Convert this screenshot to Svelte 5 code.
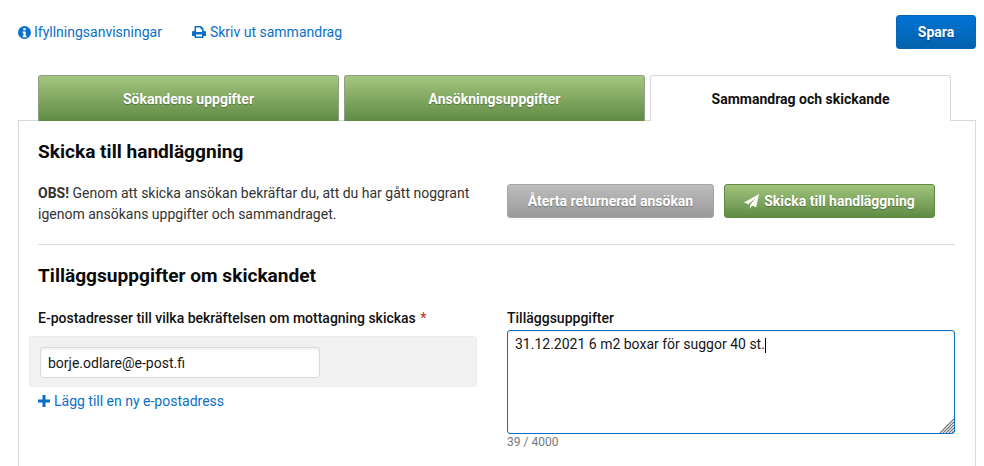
<script>
  let note = $state('31.12.2021 6 m2 boxar för suggor 40 st.');
  let email = $state('borje.odlare@e-post.fi');
</script>

<div class="page">
  <header class="top">
    <nav class="links">
      <a class="link" href="#info">
        <svg class="ico" viewBox="0 0 24 24" width="13" height="13"><path fill="currentColor" fill-rule="evenodd" d="M12 0a12 12 0 1 0 0 24 12 12 0 0 0 0-24zm-2.200 4h4.400v3.800H9.800zM8.400 10h5.800v8h1.600v2.600H8.400V18H10v-5.400H8.400z"/></svg>
        Ifyllningsanvisningar
      </a>
      <a class="link print" href="#print">
        <svg class="ico" viewBox="0 0 28 24" width="14" height="12"><path fill="currentColor" fill-rule="evenodd" d="M6 0h12l5 4.500V10h2.500A2.500 2.500 0 0 1 28 12.500V20h-5v4H5v-4H0v-7.500A2.500 2.500 0 0 1 2.500 10H5V1a1 1 0 0 1 1-1zm2 3v9h12V6.500h-3V3zM8 17v4h12v-4z"/></svg>
        Skriv ut sammandrag
      </a>
    </nav>
    <button class="btn blue">Spara</button>
  </header>

  <div class="tabs">
    <div class="tab green">Sökandens uppgifter</div>
    <div class="tab green">Ansökningsuppgifter</div>
    <div class="tab active">Sammandrag och skickande</div>
  </div>

  <main class="panel">
    <h2 class="first">Skicka till handläggning</h2>
    <div class="send">
      <p class="obs"><strong>OBS!</strong> Genom att skicka ansökan bekräftar du, att du har gått noggrant igenom ansökans uppgifter och sammandraget.</p>
      <div class="actions">
        <button class="btn gray">Återta returnerad ansökan</button>
        <button class="btn greenbtn">
          <svg viewBox="0 0 24 24" width="15" height="15"><path fill="currentColor" d="M24 0 19.500 21 12.800 18.200 9.500 23.500V18L19 6.500 6.800 16.300 0 13.500z"/></svg>
          Skicka till handläggning
        </button>
      </div>
    </div>
    <hr />
    <h2>Tilläggsuppgifter om skickandet</h2>
    <div class="cols">
      <div class="col">
        <div class="label">E-postadresser till vilka bekräftelsen om mottagning skickas <span class="req">*</span></div>
        <div class="emailbox">
          <input class="email" bind:value={email} />
        </div>
        <a class="link add" href="#add">
          <svg viewBox="0 0 12 12" width="12" height="12"><path fill="currentColor" d="M4.500 0h3v4.500H12v3H7.500V12h-3V7.500H0v-3h4.500z"/></svg>
          Lägg till en ny e-postadress
        </a>
      </div>
      <div class="col">
        <div class="label lab2">Tilläggsuppgifter</div>
        <div class="areawrap">
          <textarea bind:value={note}></textarea>
          <span class="caret"></span>
          <svg class="grip" viewBox="0 0 15 15" width="15" height="15">
            <path fill="none" stroke="#777" stroke-width="1.200" d="M15 1 1 15M15 4 4 15M15 7 7 15M15 10 10 15M15 13 13 15"/>
          </svg>
        </div>
        <div class="count">39 / 4000</div>
      </div>
    </div>
  </main>
</div>

<style>
  :global(body) {
    margin: 0;
    background: #fff;
    font-family: Roboto, "Liberation Sans", sans-serif;
    color: #161616;
    font-size: 14px;
    line-height: 20px;
  }
  .page {
    height: 466px;
    overflow: hidden;
    padding: 15px 8px 0 18px;
    box-sizing: border-box;
  }
  .top {
    display: flex;
    justify-content: space-between;
    align-items: center;
    height: 34px;
  }
  .links {
    display: flex;
    gap: 30px;
  }
  .link {
    color: #0a6fc9;
    text-decoration: none;
    display: inline-flex;
    align-items: center;
    gap: 3px;
    font-size: 14px;
  }
  .link.print, .link.add { gap: 4px; }
  .ico { flex: none; }
  .btn {
    font-family: inherit;
    font-weight: 700;
    font-size: 14px;
    color: #fff;
    border-radius: 3px;
    height: 34px;
    padding: 0;
    display: inline-flex;
    align-items: center;
    justify-content: center;
    gap: 5px;
    text-shadow: 0 1px 1px rgba(0, 0, 0, 0.3);
  }
  .blue {
    width: 80px;
    background: linear-gradient(#0073d4, #0562ad);
    border: 1px solid #0566b5;
  }
  .gray {
    width: 207px;
    background: linear-gradient(#bdbdbd, #9a9a9a);
    border: 1px solid #a5a5a5;
  }
  .greenbtn {
    width: 211px;
    background: linear-gradient(#a2c47c, #5f8b45);
    border: 1px solid #5f8b45;
  }
  .tabs {
    display: flex;
    gap: 5px;
    margin: 26px 0 0 20px;
    height: 46px;
    position: relative;
    z-index: 1;
  }
  .tab {
    box-sizing: border-box;
    width: 301px;
    height: 46px;
    display: flex;
    align-items: center;
    justify-content: center;
    border-radius: 3px 3px 0 0;
    font-weight: 700;
    font-size: 14px;
  }
  .tab.green {
    color: #fff;
    background: linear-gradient(#a5c67f, #5f8a44);
    border: 1px solid #8f9f85;
    border-bottom: 0;
    text-shadow: 0 1px 1px rgba(0, 0, 0, 0.3);
  }
  .tab.active {
    background: #fff;
    color: #111;
    border: 1px solid #d9d9d9;
    border-bottom: 0;
  }
  .panel {
    margin-top: -1px;
    border: 1px solid #d9d9d9;
    border-bottom: 0;
    padding: 0 20px 0 19px;
    height: 346px;
    box-sizing: border-box;
  }
  h2 {
    margin: 0;
    font-size: 19.100px;
    font-weight: 700;
    line-height: 24px;
    color: #0a0a0a;
  }
  h2.first { margin-top: 19px; }
  .send {
    display: flex;
    justify-content: space-between;
    margin-top: 20px;
  }
  .obs {
    margin: -1px 0 0;
    width: 450px;
    line-height: 21px;
    color: #333;
  }
  .obs strong { font-weight: 700; }
  .actions {
    display: flex;
    gap: 10px;
    margin-right: 20px;
  }
  hr {
    border: 0;
    border-top: 1px solid #dcdcdc;
    margin: 19px 0 19px;
  }
  .cols {
    display: grid;
    grid-template-columns: 448px 448px;
    column-gap: 21px;
    margin-top: 20px;
  }
  .label {
    font-weight: 500;
    font-size: 14px;
    color: #111;
    height: 20px;
    line-height: 20px;
  }
  .req { color: #c0392b; margin-left: 1px; }
  .emailbox {
    margin: 8px 0 0 -9px;
    width: 448px;
    height: 51px;
    box-sizing: border-box;
    background: #f1f1f1;
    border: 1px solid #ececec;
    border-radius: 3px;
    padding: 10px;
  }
  .email {
    display: block;
    box-sizing: border-box;
    width: 280px;
    height: 31px;
    border: 1px solid #dadada;
    border-radius: 3px;
    padding: 0 7px;
    font: 14px Roboto, sans-serif;
    color: #161616;
    background: #fff;
    box-shadow: inset 0 1px 3px rgba(0, 0, 0, 0.08);
    outline: none;
  }
  .add {
    margin-top: 4px;
  }
  .lab2 {
    margin-bottom: 2px;
  }
  .areawrap {
    position: relative;
    width: 448px;
    height: 104px;
  }
  textarea {
    display: block;
    box-sizing: border-box;
    width: 448px;
    height: 104px;
    border: 1px solid #0a6fc9;
    border-radius: 3px;
    padding: 3px 7px;
    font: 14px/20px Roboto, sans-serif;
    color: #161616;
    outline: none;
    resize: none;
    box-shadow: inset 0 1px 3px rgba(0, 0, 0, 0.08);
  }
  .caret {
    position: absolute;
    left: 258px;
    top: 8px;
    width: 1px;
    height: 15px;
    background: #000;
  }
  .grip {
    position: absolute;
    right: 1px;
    bottom: 1px;
    pointer-events: none;
  }
  .count {
    font-size: 12px;
    color: #777;
    line-height: 16px;
  }
</style>
